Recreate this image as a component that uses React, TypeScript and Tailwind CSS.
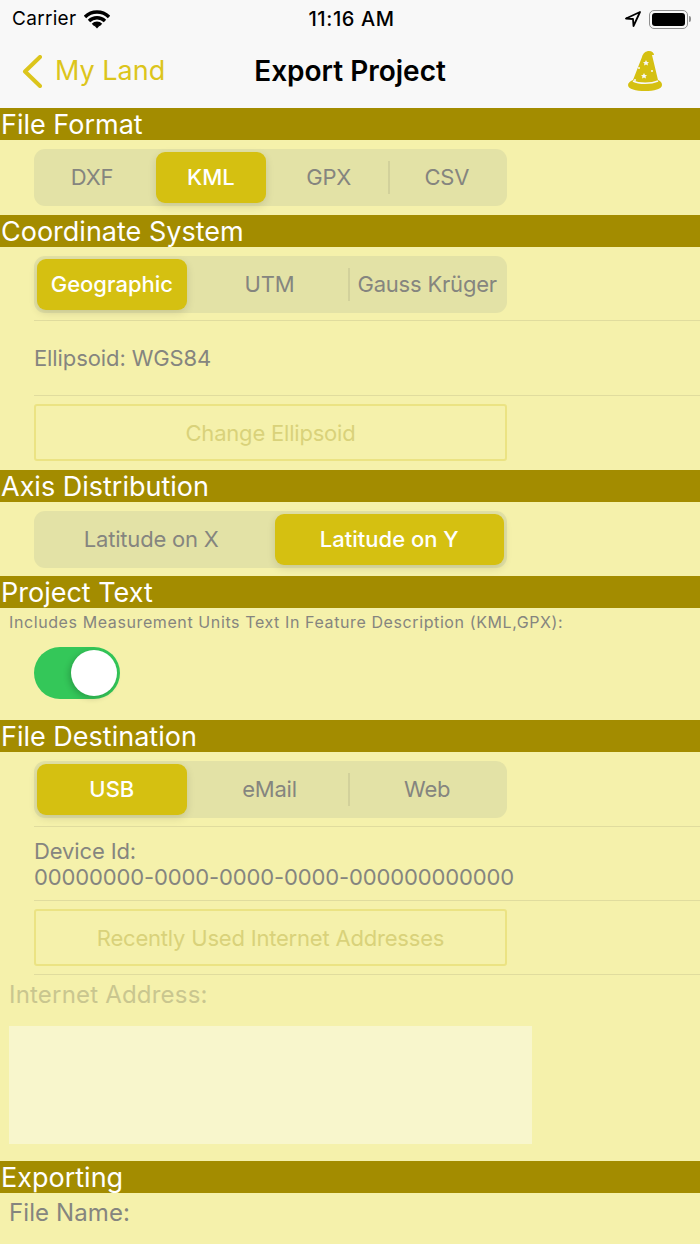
import React from 'react';

const Header: React.FC<{ title: string }> = ({ title }) => (
  <div className="h-8 bg-[#a38c00] pl-[1px] text-[27px] leading-[34px] text-white">{title}</div>
);

const Segmented: React.FC<{ items: string[]; active: number; dividers?: number[] }> = ({ items, active, dividers = [] }) => (
  <div className="flex h-[57px] w-[473px] rounded-[11px] bg-[#e3e2a6]">
    {items.map((item, i) => (
      <div key={item} className="relative flex flex-1 items-center justify-center">
        {i === active ? (
          <div
            className={`flex h-[51px] w-full items-center justify-center rounded-[9px] bg-[#d5c011] text-[22px] font-medium text-white shadow-[0_3px_8px_rgba(0,0,0,0.12)] ${
              i === 0 ? 'ml-[3px]' : 'ml-1'
            } ${i === items.length - 1 ? 'mr-[3px]' : 'mr-[5px]'}`}
          >
            {item}
          </div>
        ) : (
          <span className="pr-[2px] text-[22px] tracking-[-0.2px] text-[#85857f]">{item}</span>
        )}
        {dividers.includes(i) && <div className="absolute -left-[1px] top-3 h-[33px] w-[2px] bg-[#d2d19b]" />}
      </div>
    ))}
  </div>
);

const Divider = () => <div className="ml-[34px] h-[1px] bg-[#e0dc9e]" />;

const OutlineButton: React.FC<{ label: string }> = ({ label }) => (
  <div className="ml-[34px] flex h-[57px] w-[473px] items-center justify-center rounded-[3px] border-2 border-[#ebe383] pt-[1px] text-[22px] tracking-[-0.2px] text-[#d9d27a]">
    {label}
  </div>
);

const WizardHat = () => (
  <svg width="36" height="42" viewBox="0 0 36 42">
    <path d="M6 30L15 7C16 3 19 1 22 1C25 1 27 3 27 5L25 5C27 13 29 22 31 30C34 31 35 33 35 35C35 39 27 41 18 41C9 41 1 39 1 35C1 33 3 31 6 30Z" fill="#d5c011" />
    <path d="M6 31c6 3 18 3 25 0" stroke="#f8f8f8" strokeWidth="1.500" fill="none" />
    <path d="M19 10l1 2 2 .2-1.500 1.400.5 2-2-1-2 1 .5-2L16 12.200l2-.2z" fill="#f8f8f8" />
    <path d="M17 23l1 2 2 .2-1.500 1.400.5 2-2-1-2 1 .5-2L14 25.200l2-.2z" fill="#f8f8f8" />
    <circle cx="12" cy="18" r="1" fill="#f8f8f8" />
    <circle cx="25" cy="21" r="1" fill="#f8f8f8" />
    <circle cx="8" cy="30" r="1" fill="#f8f8f8" />
  </svg>
);

const NavBar = () => (
  <div className="h-[108px] bg-[#f8f8f8] text-black">
    <div className="flex h-9 items-center justify-between pl-3 pr-[9px] pt-[2px]">
      <div className="flex w-[200px] items-center gap-2">
        <span className="text-[19px] tracking-[0.3px]">Carrier</span>
        <svg width="26" height="19" viewBox="0 0 26 19">
          <path d="M1 7a17 17 0 0 1 24 0M5 11a11.500 11.500 0 0 1 16 0M9 15a5.500 5.500 0 0 1 8 0" stroke="#000" strokeWidth="3.400" fill="none" />
          <path d="M10.500 15.800a3.500 3.500 0 0 1 5 0L13 18.500z" fill="#000" />
        </svg>
      </div>
      <span className="text-[20px] font-medium tracking-[0.6px]">11:16 AM</span>
      <div className="flex w-[200px] items-center justify-end gap-[8px]">
        <svg width="16" height="16" viewBox="0 0 16 16">
          <path d="M15 1L1 7.500l7 .5.500 7z" fill="none" stroke="#000" strokeWidth="1.800" strokeLinejoin="round" />
        </svg>
        <div className="flex items-center gap-[1px]">
          <div className="h-[19px] w-[39px] rounded-[5px] border border-[#8f8f8f] p-[2px]">
            <div className="h-full w-full rounded-[3px] bg-black" />
          </div>
          <div className="h-[6px] w-[2px] rounded-r-sm bg-[#8f8f8f]" />
        </div>
      </div>
    </div>
    <div className="relative flex h-[72px] items-center justify-between pb-[2px] pl-[22px] pr-[37px]">
      <div className="flex items-center gap-[13px] text-[#dcc51c]">
        <svg width="20" height="33" viewBox="0 0 20 33">
          <path d="M18 2L3 16.500 18 31" stroke="#dcc51c" strokeWidth="4" strokeLinecap="round" strokeLinejoin="round" fill="none" />
        </svg>
        <span className="text-[27px]">My Land</span>
      </div>
      <div className="absolute inset-x-0 top-[17px] text-center text-[28px] leading-9 font-semibold">Export Project</div>
      <WizardHat />
    </div>
  </div>
);

export default function App() {
  return (
    <div className="h-[1244px] w-[700px] overflow-hidden bg-[#f5f1ab] font-['Inter','Liberation_Sans',sans-serif]">
      <NavBar />

      <Header title="File Format" />
      <div className="py-[9px] pl-[34px]">
        <Segmented items={['DXF', 'KML', 'GPX', 'CSV']} active={1} dividers={[3]} />
      </div>

      <Header title="Coordinate System" />
      <div className="pb-[7px] pl-[34px] pt-[9px]">
        <Segmented items={['Geographic', 'UTM', 'Gauss Krüger']} active={0} dividers={[2]} />
      </div>
      <Divider />
      <div className="flex h-[74px] items-center pl-[34px] text-[22px] tracking-[-0.1px] text-[#85857f]">Ellipsoid: WGS84</div>
      <Divider />
      <div className="pb-[9px] pt-2">
        <OutlineButton label="Change Ellipsoid" />
      </div>

      <Header title="Axis Distribution" />
      <div className="pb-2 pl-[34px] pt-[9px]">
        <Segmented items={['Latitude on X', 'Latitude on Y']} active={1} />
      </div>

      <Header title="Project Text" />
      <div className="h-[112px]">
        <div className="pl-[9px] pt-[4px] text-[16px] leading-5 tracking-[0.6px] text-[#85857f]">
          Includes Measurement Units Text In Feature Description (KML,GPX):
        </div>
        <div className="ml-[34px] mt-[15px] flex h-[52px] w-[86px] items-center justify-end rounded-full bg-[#34c759] pr-[3px]">
          <div className="h-[46px] w-[46px] rounded-full bg-white shadow-[-2px_2px_6px_rgba(0,0,0,0.2)]" />
        </div>
      </div>

      <Header title="File Destination" />
      <div className="pb-2 pl-[34px] pt-[9px]">
        <Segmented items={['USB', 'eMail', 'Web']} active={0} dividers={[2]} />
      </div>
      <Divider />
      <div className="h-[73px] pl-[34px] pt-[11px] text-[22px] leading-[26px] tracking-[-0.13px] text-[#85857f]">
        <div>Device Id:</div>
        <div>00000000-0000-0000-0000-000000000000</div>
      </div>
      <Divider />
      <div className="py-2">
        <OutlineButton label="Recently Used Internet Addresses" />
      </div>
      <Divider />
      <div className="pl-[9px] pt-[4px] text-[24px] leading-8 tracking-[0.2px] text-[#c9c68f]">Internet Address:</div>
      <div className="ml-[9px] mt-[15px] h-[118px] w-[523px] bg-[#f8f6cc]" />
      <div className="h-[17px]" />

      <Header title="Exporting" />
      <div className="pl-[9px] pt-[4px] text-[24px] leading-8 tracking-[0.1px] text-[#85857f]">File Name:</div>
    </div>
  );
}
